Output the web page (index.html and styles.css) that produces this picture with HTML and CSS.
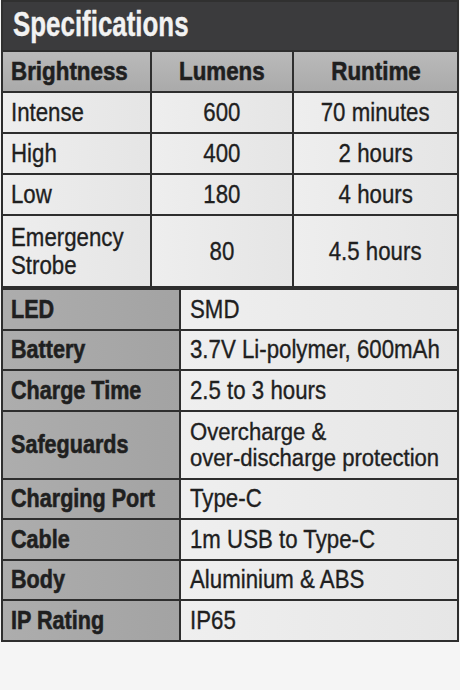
FILE: index.html
```html
<!DOCTYPE html>
<html>
<head>
<meta charset="utf-8">
<link rel="stylesheet" href="styles.css">
</head>
<body>
<div class="sheet">
  <div class="title"><span class="t">Specifications</span></div>
  <table class="modes">
    <colgroup><col class="c1"><col class="c2"><col class="c3"></colgroup>
    <thead>
      <tr><th class="left"><span class="t">Brightness</span></th><th><span class="t">Lumens</span></th><th><span class="t">Runtime</span></th></tr>
    </thead>
    <tbody>
      <tr><td class="left"><span class="t">Intense</span></td><td><span class="t">600</span></td><td><span class="t">70 minutes</span></td></tr>
      <tr><td class="left"><span class="t">High</span></td><td><span class="t">400</span></td><td><span class="t">2 hours</span></td></tr>
      <tr><td class="left"><span class="t">Low</span></td><td><span class="t">180</span></td><td><span class="t">4 hours</span></td></tr>
      <tr class="tall"><td class="left"><span class="t">Emergency<br>Strobe</span></td><td><span class="t">80</span></td><td><span class="t">4.5 hours</span></td></tr>
    </tbody>
  </table>
  <table class="specs">
    <colgroup><col class="k"><col class="v"></colgroup>
    <tbody>
      <tr><th><span class="t">LED</span></th><td><span class="t">SMD</span></td></tr>
      <tr><th><span class="t">Battery</span></th><td><span class="t">3.7V Li-polymer, 600mAh</span></td></tr>
      <tr><th><span class="t">Charge Time</span></th><td><span class="t">2.5 to 3 hours</span></td></tr>
      <tr class="tall"><th><span class="t">Safeguards</span></th><td><span class="t two">Overcharge &amp;<br>over-discharge protection</span></td></tr>
      <tr><th><span class="t">Charging Port</span></th><td><span class="t">Type-C</span></td></tr>
      <tr><th><span class="t">Cable</span></th><td><span class="t">1m USB to Type-C</span></td></tr>
      <tr><th><span class="t">Body</span></th><td><span class="t">Aluminium &amp; ABS</span></td></tr>
      <tr><th><span class="t">IP Rating</span></th><td><span class="t">IP65</span></td></tr>
    </tbody>
  </table>
</div>
</body>
</html>
```
FILE: styles.css
```css
html, body {
  margin: 0;
  padding: 0;
  background: #f5f5f5;
}
body {
  font-family: "Liberation Sans", Arial, sans-serif;
  color: #1f1f1f;
}
.sheet {
  width: 458px;
  margin-left: 1px;
}
.t {
  display: inline-block;
  white-space: nowrap;
  transform-origin: left center;
  transform: scaleX(0.89);
  -webkit-text-stroke: 0.35px currentColor;
}
.title {
  height: 50px;
  box-sizing: border-box;
  background: #3b3b3d;
  color: #f2f2f2;
  font-weight: bold;
  font-size: 35px;
  line-height: 44px;
  padding-left: 10px;
  border: 2px solid #303030;
  border-bottom: none;
}
.title .t {
  transform: scaleX(0.74);
  -webkit-text-stroke: 0.4px currentColor;
}
table {
  width: 458px;
  border-collapse: collapse;
  table-layout: fixed;
}
th, td {
  border: 2px solid #2e2e2e;
  padding: 0;
  font-size: 25px;
  line-height: 27px;
  overflow: visible;
}
th .t {
  transform: scaleX(0.83);
  -webkit-text-stroke: 0.6px currentColor;
}
.modes .c1 { width: 149px; }
.modes .c2 { width: 142px; }
.modes th {
  background: linear-gradient(#bababa, #aaaaaa);
  font-weight: bold;
  font-size: 26px;
  text-align: center;
  height: 39px;
}
.modes th .t {
  transform: scaleX(0.86);
}
.modes td {
  background: linear-gradient(90deg, #eeeeee, #e5e5e5);
  text-align: center;
  height: 39px;
}
.modes th .t, .modes td .t {
  transform-origin: center center;
}
.modes .left {
  text-align: left;
  padding-left: 8px;
}
.modes .left .t {
  transform-origin: left center;
}
.modes tr.tall td {
  height: 70px;
  line-height: 28px;
}
.specs .k { width: 178px; }
.specs th {
  background: linear-gradient(90deg, #adadad, #a3a3a3);
  font-weight: bold;
  font-size: 26px;
  text-align: left;
  padding-left: 8px;
  height: 38.5px;
}
.specs td {
  background: linear-gradient(90deg, #efefef, #e6e6e6);
  text-align: left;
  padding-left: 9px;
  height: 38.5px;
}
.specs tr.tall th, .specs tr.tall td {
  height: 66px;
}
.specs td .two {
  font-size: 23px;
  line-height: 26px;
  transform: scaleX(0.96);
}
```
